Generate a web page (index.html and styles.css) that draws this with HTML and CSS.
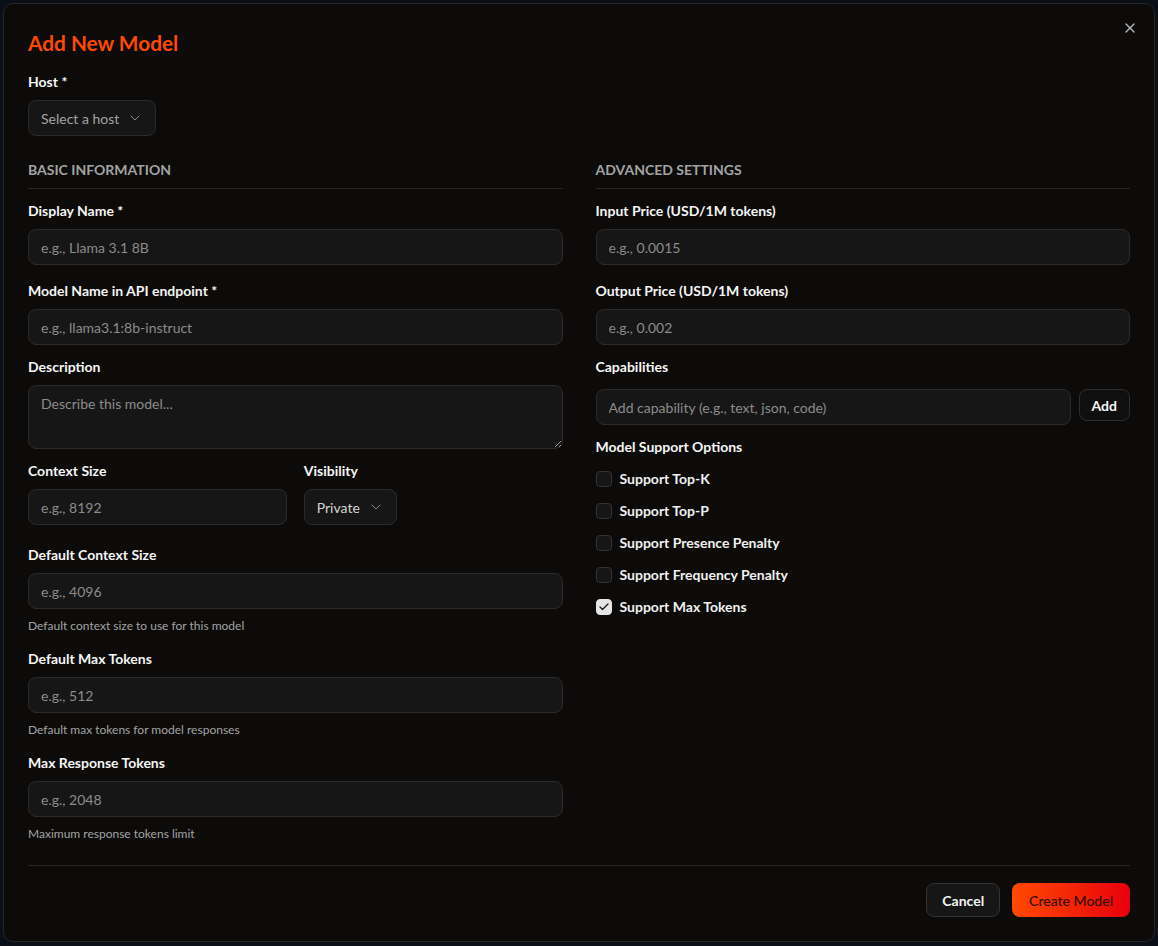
FILE: index.html
```html
<!DOCTYPE html>
<html lang="en">
<head>
<meta charset="utf-8">
<title>Add New Model</title>
<link rel="stylesheet" href="styles.css">
</head>
<body>
<div class="modal">
  <button class="close" aria-label="Close">
    <svg width="16" height="16" viewBox="0 0 24 24" fill="none" stroke="currentColor" stroke-width="2" stroke-linecap="round" stroke-linejoin="round"><path d="M18 6 6 18"/><path d="m6 6 12 12"/></svg>
  </button>
  <div class="body">
    <h2 class="title">Add New Model</h2>
    <div class="host">
      <label class="label">Host *</label>
      <button class="select">Select a host
        <svg class="chev" width="16" height="16" viewBox="0 0 24 24" fill="none" stroke="currentColor" stroke-width="1.5" stroke-linecap="round" stroke-linejoin="round"><path d="m6 9 6 6 6-6"/></svg>
      </button>
    </div>
    <div class="columns">
      <div class="col">
        <h3 class="section">Basic Information</h3>
        <div class="field f-first">
          <label class="label">Display Name *</label>
          <input class="input" placeholder="e.g., Llama 3.1 8B">
        </div>
        <div class="field f-16">
          <label class="label">Model Name in API endpoint *</label>
          <input class="input" placeholder="e.g., llama3.1:8b-instruct">
        </div>
        <div class="field f-12">
          <label class="label">Description</label>
          <textarea class="input area" placeholder="Describe this model..."></textarea>
        </div>
        <div class="pair f-12">
          <div class="field">
            <label class="label">Context Size</label>
            <input class="input" placeholder="e.g., 8192">
          </div>
          <div class="field">
            <label class="label">Visibility</label>
            <button class="select">Private
              <svg class="chev" width="16" height="16" viewBox="0 0 24 24" fill="none" stroke="currentColor" stroke-width="1.5" stroke-linecap="round" stroke-linejoin="round"><path d="m6 9 6 6 6-6"/></svg>
            </button>
          </div>
        </div>
        <div class="field f-20">
          <label class="label">Default Context Size</label>
          <input class="input" placeholder="e.g., 4096">
          <p class="help">Default context size to use for this model</p>
        </div>
        <div class="field f-15">
          <label class="label">Default Max Tokens</label>
          <input class="input" placeholder="e.g., 512">
          <p class="help">Default max tokens for model responses</p>
        </div>
        <div class="field f-15">
          <label class="label">Max Response Tokens</label>
          <input class="input" placeholder="e.g., 2048">
          <p class="help">Maximum response tokens limit</p>
        </div>
      </div>
      <div class="col">
        <h3 class="section">Advanced Settings</h3>
        <div class="field f-first">
          <label class="label">Input Price (USD/1M tokens)</label>
          <input class="input" placeholder="e.g., 0.0015">
        </div>
        <div class="field f-16">
          <label class="label">Output Price (USD/1M tokens)</label>
          <input class="input" placeholder="e.g., 0.002">
        </div>
        <div class="field f-12">
          <label class="label cap-label">Capabilities</label>
          <div class="cap-row">
            <input class="input" placeholder="Add capability (e.g., text, json, code)">
            <button class="btn btn-add">Add</button>
          </div>
        </div>
        <div class="field f-12">
          <label class="label">Model Support Options</label>
          <ul class="checks">
            <li class="check"><span class="box"></span>Support Top-K</li>
            <li class="check"><span class="box"></span>Support Top-P</li>
            <li class="check"><span class="box"></span>Support Presence Penalty</li>
            <li class="check"><span class="box"></span>Support Frequency Penalty</li>
            <li class="check"><span class="box checked"><svg width="12" height="12" viewBox="0 0 24 24" fill="none" stroke="currentColor" stroke-width="2.5" stroke-linecap="round" stroke-linejoin="round"><path d="M20 6 9 17l-5-5"/></svg></span>Support Max Tokens</li>
          </ul>
        </div>
      </div>
    </div>
  </div>
  <div class="footer">
    <button class="btn btn-cancel">Cancel</button>
    <button class="btn btn-create">Create Model</button>
  </div>
</div>
</body>
</html>
```

FILE: styles.css
```css
* { box-sizing: border-box; }
html, body { margin: 0; padding: 0; }
body {
  width: 1158px;
  height: 946px;
  overflow: hidden;
  background: #0b0f18;
  font-family: "Lato", "Open Sans", sans-serif;
  color: #f5f5f5;
}
.modal {
  position: relative;
  margin: 3px;
  width: 1152px;
  height: 939px;
  border: 1px solid #262626;
  border-radius: 10px;
  background: #0c0b0a;
  padding: 25px 24px 24px;
  display: flex;
  flex-direction: column;
}
.close {
  position: absolute;
  top: 16px;
  right: 16px;
  width: 16px;
  height: 16px;
  padding: 0;
  border: 0;
  background: none;
  color: #b5b5b5;
  display: flex;
}
.body { flex: 1; }
.title {
  margin: 0;
  font-size: 20.8px;
  line-height: 28px;
  font-weight: 700;
  color: #ff4800;
}
.host { margin-top: 15px; }
.label {
  display: block;
  font-size: 14px;
  line-height: 20px;
  font-weight: 700;
  color: #f5f5f5;
  margin-bottom: 8px;
}
.select {
  display: inline-flex;
  align-items: center;
  gap: 8px;
  height: 36px;
  padding: 0 12px;
  background: #161616;
  border: 1px solid #2b2b2b;
  border-radius: 8px;
  color: #d4d4d4;
  font-family: inherit;
  font-size: 14px;
}
.host .select { color: #a3a3a3; }
.chev { color: #8a8a8a; }
.columns {
  margin-top: 24px;
  display: grid;
  grid-template-columns: 1fr 1fr;
  column-gap: 33px;
}
.section {
  margin: 0;
  font-size: 14px;
  line-height: 20px;
  font-weight: 700;
  text-transform: uppercase;
  color: #a3a3a3;
  padding-bottom: 8px;
  border-bottom: 1px solid #262626;
}
.f-first { margin-top: 12px; }
.f-16 { margin-top: 16px; }
.f-12 { margin-top: 12px; }
.f-20 { margin-top: 20px; }
.f-15 { margin-top: 15px; }
.input {
  display: block;
  width: 100%;
  height: 36px;
  padding: 0 12px;
  background: #161616;
  border: 1px solid #2b2b2b;
  border-radius: 8px;
  color: #f5f5f5;
  font-family: inherit;
  font-size: 14px;
  outline: none;
}
.input::placeholder { color: #8c8c8c; }
.area {
  height: 64px;
  padding: 8px 12px;
  resize: vertical;
  line-height: 20px;
}
.pair {
  display: grid;
  grid-template-columns: 1fr 1fr;
  column-gap: 17px;
}
.help {
  margin: 9px 0 0;
  font-size: 12px;
  line-height: 16px;
  color: #a3a3a3;
}
.cap-label { margin-bottom: 12px; }
.cap-row {
  display: flex;
  align-items: flex-start;
  gap: 8px;
}
.cap-row .input { flex: 1; }
.btn {
  font-family: inherit;
  font-size: 14px;
  font-weight: 700;
  border-radius: 8px;
  cursor: pointer;
}
.btn-add {
  height: 32px;
  padding: 0 12px;
  background: #0f0f0f;
  border: 1px solid #2e2e2e;
  color: #f5f5f5;
}
.checks {
  list-style: none;
  margin: 12px 0 0;
  padding: 0;
  display: flex;
  flex-direction: column;
  gap: 12px;
}
.check {
  display: flex;
  align-items: center;
  gap: 8px;
  font-size: 14px;
  line-height: 20px;
  font-weight: 700;
  color: #f0f0f0;
}
.box {
  width: 16px;
  height: 16px;
  border-radius: 4px;
  border: 1px solid #333;
  background: #161616;
  display: flex;
  align-items: center;
  justify-content: center;
}
.box.checked {
  background: #e5e5e5;
  border-color: #e5e5e5;
  color: #171717;
}
.footer {
  border-top: 1px solid #262626;
  padding-top: 17px;
  display: flex;
  justify-content: flex-end;
  gap: 12px;
}
.btn-cancel {
  height: 34px;
  padding: 0 15px;
  background: #161616;
  border: 1px solid #333;
  color: #f5f5f5;
}
.btn-create {
  height: 34px;
  padding: 0 17px;
  border: 0;
  background: linear-gradient(90deg, #ff4a00, #e8000b);
  color: #340c06;
  font-weight: 500;
}
```
